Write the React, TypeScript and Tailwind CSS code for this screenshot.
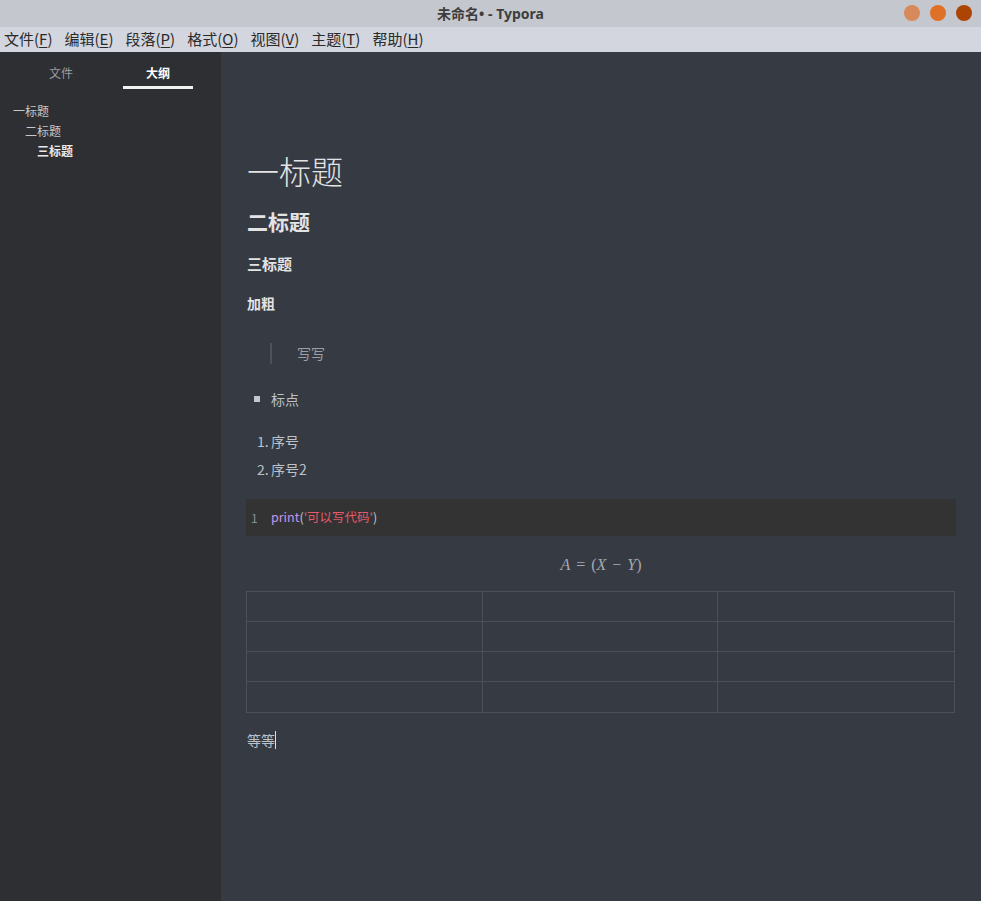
import React from "react";

const font = { fontFamily: '"Noto Sans CJK SC", "Noto Sans", sans-serif' };

function M({ t, k }: { t: string; k: string }) {
  return (
    <span className="whitespace-nowrap">
      {t}(<span className="underline underline-offset-2">{k}</span>)
    </span>
  );
}

export default function App() {
  return (
    <div className="w-[981px] h-[901px] flex flex-col overflow-hidden" style={font}>
      <div className="h-[27px] bg-[#c4c7ce] relative flex items-center justify-center">
        <span className="text-[14px] font-bold text-[#3d3d3d]">
          未命名<span style={{ fontFamily: '"Noto Sans", sans-serif' }}>• - Typora</span>
        </span>
        <div className="absolute right-[9px] top-[5px] flex gap-[10px]">
          <div className="w-[16px] h-[16px] rounded-full bg-[#d7895a]" />
          <div className="w-[16px] h-[16px] rounded-full bg-[#df7027]" />
          <div className="w-[16px] h-[16px] rounded-full bg-[#ac4503]" />
        </div>
      </div>
      <div className="h-[25px] bg-[#d3d6de] flex items-center gap-[12px] pl-[4px] text-[15px] text-[#2a2a2a]">
        <M t="文件" k="F" />
        <M t="编辑" k="E" />
        <M t="段落" k="P" />
        <M t="格式" k="O" />
        <M t="视图" k="V" />
        <M t="主题" k="T" />
        <M t="帮助" k="H" />
      </div>
      <div className="flex flex-1 min-h-0">
        <div className="w-[221px] bg-[#2e2f33] flex flex-col">
          <div className="flex h-[38px] text-[12px]">
            <div className="w-[122px] flex justify-center pt-[12px] text-[#9a9ba0]">文件</div>
            <div className="w-[72px] flex flex-col items-center pt-[12px] text-white font-bold">
              <span>大纲</span>
              <div className="mt-[4px] w-[70px] h-[3px] bg-[#f2f2f2]" />
            </div>
          </div>
          <div className="text-[12px] text-[#c6c8cc] pt-[12px] flex flex-col gap-[3px]">
            <div className="pl-[13px] leading-[17px]">一标题</div>
            <div className="pl-[25px] leading-[17px]">二标题</div>
            <div className="pl-[37px] leading-[17px] font-bold text-[#e8e8e8]">三标题</div>
          </div>
        </div>
        <div className="flex-1 bg-[#363a43] pl-[25px] pr-[25px] text-[#bcc2c9] text-[14px]">
          <div className="pt-[96px] text-[32px] font-light text-[#e3e3e3] leading-[44px] pl-[1px]">一标题</div>
          <div className="mt-[14px] text-[21px] font-bold text-[#e3e3e3] leading-[30px] pl-[1px]">二标题</div>
          <div className="mt-[18px] text-[15px] font-bold text-[#e3e3e3] leading-[20px] pl-[1px]">三标题</div>
          <div className="mt-[19px] text-[14px] font-bold text-[#e3e3e3] leading-[20px] pl-[1px]">加粗</div>
          <div className="mt-[30px] ml-[24px] border-l-2 border-[#4d515a] h-[21px] pl-[25px] flex items-center text-[#9b9ea4]">写写</div>
          <div className="mt-[25px] flex items-center h-[20px]">
            <div className="w-[6px] h-[6px] bg-[#c6c8cc] ml-[8px] mr-[11px]" />
            <span>标点</span>
          </div>
          <div className="mt-[22px] flex items-center h-[20px] pl-[11px]">
            <span className="w-[14px]">1.</span>
            <span>序号</span>
          </div>
          <div className="mt-[8px] flex items-center h-[20px] pl-[11px]">
            <span className="w-[14px]">2.</span>
            <span>序号2</span>
          </div>
          <div className="mt-[20px] h-[37px] bg-[#333333] flex items-center text-[12.5px]">
            <span className="w-[25px] pl-[5px] text-[#8a8f96] text-[12px]">1</span>
            <span className="text-[#c795e8]">print</span>
            <span className="text-[#c4c7cc]">(</span>
            <span className="text-[#e8596b]">'可以写代码'</span>
            <span className="text-[#c4c7cc]">)</span>
          </div>
          <div className="mt-[17px] h-[24px] flex justify-center items-center text-[#a5a8ae] text-[16px]" style={{ fontFamily: '"Liberation Serif", serif' }}>
            <i>A</i>
            <span className="mx-[6px]">=</span>
            <span>(</span>
            <i>X</i>
            <span className="mx-[6px]">−</span>
            <i>Y</i>
            <span>)</span>
          </div>
          <div className="mt-[14px] grid grid-cols-3 border border-[#4d5059] w-[709px]">
            {Array.from({ length: 12 }).map((_, i) => (
              <div
                key={i}
                className={
                  "h-[30px] border-[#4d5059] " +
                  (i % 3 !== 2 ? "border-r " : "") +
                  (i < 9 ? "border-b" : "")
                }
              />
            ))}
          </div>
          <div className="mt-[16px] flex items-center h-[22px] pl-[1px]">
            <span>等等</span>
            <span className="w-[1px] h-[18px] bg-[#dddddd]" />
          </div>
        </div>
      </div>
    </div>
  );
}
